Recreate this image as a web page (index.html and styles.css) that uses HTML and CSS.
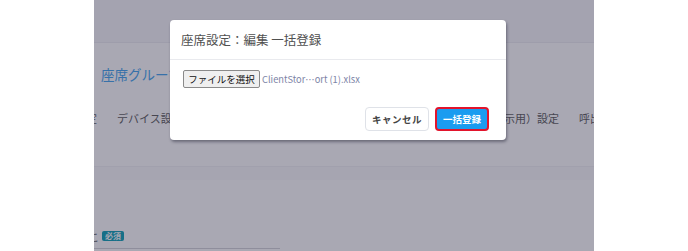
FILE: index.html
```html
<!DOCTYPE html>
<html lang="ja">
<head>
<meta charset="utf-8">
<title>座席設定</title>
<link rel="stylesheet" href="styles.css">
</head>
<body>
<div class="page">
  <header class="topbar"></header>
  <div class="content">
    <h2 class="page-title">座席グループ設定</h2>
    <nav class="tabs">
      <span class="tab">表示設定</span>
      <span class="tab">デバイス設定</span>
      <span class="tab">利用者設定</span>
      <span class="tab">座席グループ設定</span>
      <span class="tab">座席レイアウト</span>
      <span class="tab">（掲示用）設定</span>
      <span class="tab">呼出設定</span>
    </nav>
    <div class="band"></div>
    <div class="form-row">
      <span class="label-cut">こ</span>
      <span class="badge">必須</span>
    </div>
  </div>
  <div class="scrollbar"></div>
  <div class="overlay"></div>
  <div class="modal">
    <div class="modal-header">
      <h3 class="modal-title">座席設定：編集 一括登録</h3>
    </div>
    <div class="modal-body">
      <button class="file-btn" type="button">ファイルを選択</button>
      <span class="file-name">ClientStor…ort (1).xlsx</span>
    </div>
    <div class="modal-footer">
      <button class="btn btn-cancel" type="button">キャンセル</button>
      <button class="btn btn-primary" type="button">一括登録</button>
    </div>
  </div>
</div>
</body>
</html>
```

FILE: styles.css
```css
* { box-sizing: border-box; }
html, body { margin: 0; padding: 0; }
body {
  background: #ffffff;
  font-family: "Noto Sans CJK JP", "Noto Sans", sans-serif;
  width: 688px;
  height: 251px;
  overflow: hidden;
}
.page {
  position: relative;
  width: 500px;
  height: 251px;
  margin: 0 auto;
  background: #ffffff;
  overflow: hidden;
}
.topbar {
  height: 43px;
  background: #f8f8fa;
  border-bottom: 1px solid #eeeef2;
}
.content {
  display: flex;
  flex-direction: column;
}
.page-title {
  margin: 19px 0 0 7px;
  font-size: 13.5px;
  line-height: 24px;
  font-weight: 400;
  color: #4eaaf0;
  white-space: nowrap;
}
.tabs {
  display: flex;
  margin: 22px 0 0 -51px;
  font-size: 11px;
  line-height: 20px;
  color: #666;
  white-space: nowrap;
}
.tab { padding: 0 10px; flex: none; }
.tab-wide { padding-right: 7px; }
.band {
  margin-top: 38px;
  height: 14px;
  background: #fafafc;
  border-top: 1px solid #f3f3f6;
}
.form-row {
  display: flex;
  align-items: center;
  gap: 3px;
  margin: 51px 0 0 -5px;
  height: 10px;
}
.label-cut { font-size: 10px; color: #666; }
.badge {
  background: #19a6bb;
  color: #fff;
  font-size: 8px;
  line-height: 10px;
  padding: 0 3px;
  border-radius: 2px;
  font-weight: 700;
}
.scrollbar {
  position: absolute;
  left: 0;
  bottom: 2px;
  width: 186px;
  height: 1px;
  background: #d6d6dc;
}
.overlay {
  position: absolute;
  inset: 0;
  background: rgba(18, 15, 45, 0.36);
}
.modal {
  position: absolute;
  left: 76px;
  top: 20px;
  width: 336px;
  height: 120px;
  background: #fff;
  border-radius: 4px;
  box-shadow: 1px 2px 3px rgba(30, 30, 50, 0.45);
  display: flex;
  flex-direction: column;
}
.modal-header {
  height: 40px;
  display: flex;
  align-items: center;
  padding: 0 11px;
  border-bottom: 1px solid #e9eaee;
}
.modal-title {
  margin: 0;
  font-size: 12.5px;
  font-weight: 400;
  color: #505050;
  white-space: nowrap;
}
.modal-body {
  display: flex;
  align-items: center;
  gap: 2px;
  padding: 10px 13px 0;
}
.file-btn {
  height: 18px;
  width: 77px;
  padding: 0;
  font-family: "Noto Sans CJK JP", sans-serif;
  font-size: 9.5px;
  color: #111;
  background: #efefef;
  border: 1px solid #8a8a8a;
  border-radius: 2px;
}
.file-name {
  font-size: 9.3px;
  color: #7d84a6;
  white-space: nowrap;
}
.modal-footer {
  margin-top: auto;
  display: flex;
  justify-content: flex-end;
  gap: 6px;
  padding: 0 17px 9px;
}
.btn {
  height: 24px;
  border-radius: 4px;
  font-family: "Noto Sans CJK JP", sans-serif;
  font-size: 9.5px;
  font-weight: 700;
  padding: 0;
}
.btn-cancel {
  width: 64px;
  background: #fff;
  border: 1px solid #dfe2e8;
  color: #444;
  letter-spacing: 0.5px;
}
.btn-primary {
  width: 54px;
  background: #1a9cf0;
  border: 2px solid #e2142c;
  color: #fff;
}
```
